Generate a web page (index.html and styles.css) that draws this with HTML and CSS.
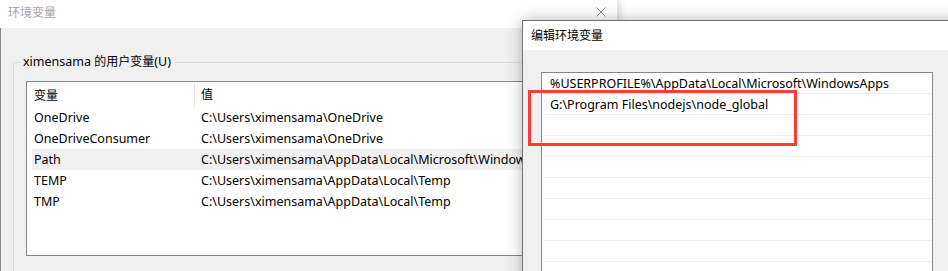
FILE: index.html
```html
<!DOCTYPE html>
<html lang="zh-CN">
<head>
<meta charset="utf-8">
<link rel="stylesheet" href="styles.css">
</head>
<body>
<div class="desktop">
  <div class="win win-env">
    <div class="titlebar">
      <span class="title inactive">环境变量</span>
      <svg class="close" width="10" height="10" viewBox="0 0 10 10"><path d="M0.5 0.5L9.5 9.5M9.5 0.5L0.5 9.5" stroke="#8a8a8a" stroke-width="1"/></svg>
    </div>
    <div class="body">
      <div class="group">
        <div class="legend">ximensama <span class="cjk">的用户变量</span>(U)</div>
        <div class="listview">
          <div class="lv-head">
            <div class="col c1 cjk">变量</div>
            <div class="col c2 cjk">值</div>
          </div>
          <div class="lv-row"><div class="col c1">OneDrive</div><div class="col c2">C:\Users\ximensama\OneDrive</div></div>
          <div class="lv-row"><div class="col c1">OneDriveConsumer</div><div class="col c2">C:\Users\ximensama\OneDrive</div></div>
          <div class="lv-row hl"><div class="col c1">Path</div><div class="col c2">C:\Users\ximensama\AppData\Local\Microsoft\WindowsApps;</div></div>
          <div class="lv-row"><div class="col c1">TEMP</div><div class="col c2">C:\Users\ximensama\AppData\Local\Temp</div></div>
          <div class="lv-row"><div class="col c1">TMP</div><div class="col c2">C:\Users\ximensama\AppData\Local\Temp</div></div>
        </div>
      </div>
    </div>
  </div>

  <div class="win win-edit">
    <div class="titlebar2">
      <span class="title">编辑环境变量</span>
    </div>
    <div class="body2">
      <div class="pathlist">
        <div class="p-row">%USERPROFILE%\AppData\Local\Microsoft\WindowsApps</div>
        <div class="p-row">G:\Program Files\nodejs\node_global</div>
        <div class="p-row"></div>
        <div class="p-row"></div>
        <div class="p-row"></div>
        <div class="p-row"></div>
        <div class="p-row"></div>
        <div class="p-row"></div>
        <div class="p-row"></div>
        <div class="p-row"></div>
      </div>
    </div>
  </div>

  <div class="mark"></div>
</div>
</body>
</html>
```

FILE: styles.css
```css
html, body {
  margin: 0;
  padding: 0;
  width: 948px;
  height: 271px;
  overflow: hidden;
  background: #ffffff;
}
.desktop {
  position: relative;
  width: 948px;
  height: 271px;
  overflow: hidden;
  font-family: "Noto Sans", "Noto Sans CJK SC", sans-serif;
  font-size: 12.5px;
  color: #000;
}
.cjk {
  font-size: 12px;
}
.win {
  position: absolute;
  display: flex;
  flex-direction: column;
}
.win-env {
  left: 0;
  top: 0;
  width: 617px;
  height: 300px;
  box-shadow: 2px 0 8px rgba(0,0,0,0.18);
}
.titlebar {
  height: 28px;
  flex: none;
  background: #fff;
  display: flex;
  align-items: center;
  padding-left: 8px;
  padding-right: 11px;
  box-sizing: border-box;
}
.title {
  flex: 1;
  font-size: 12px;
  line-height: 16px;
  padding-bottom: 2px;
}
.title.inactive {
  color: #a6a6a6;
}
.close {
  flex: none;
  margin-bottom: 4px;
}
.body {
  flex: 1;
  background: #f0f0f0;
  border-left: 1px solid #8c8c8c;
  padding: 34px 0 0 12px;
}
.group {
  position: relative;
  border-left: 1px solid #dcdcdc;
  border-top: 1px solid #dcdcdc;
  padding: 18px 0 0 12px;
  height: 260px;
}
.legend {
  position: absolute;
  left: 6px;
  top: -9px;
  padding: 0 3px;
  background: #f0f0f0;
  line-height: 16px;
}
.listview {
  background: #fff;
  border: 1px solid #828790;
  border-right: none;
  height: 173px;
  padding-left: 5px;
}
.lv-head {
  display: flex;
  height: 25px;
  align-items: center;
}
.lv-head .c1 {
  border-right: 1px solid #e5e5e5;
  height: 24px;
  display: flex;
  align-items: center;
  margin-top: 1px;
}
.lv-row {
  display: flex;
  height: 21px;
  align-items: center;
}
.lv-row.hl {
  background: #f0f0f0;
}
.col {
  white-space: nowrap;
  overflow: hidden;
  padding-bottom: 1px;
}
.c1 {
  width: 161px;
  padding-left: 2px;
  flex: none;
}
.lv-head .c1 {
  width: 160px;
}
.c2 {
  padding-left: 6px;
}
.win-edit {
  left: 522px;
  top: 20px;
  width: 480px;
  height: 300px;
  border: 1px solid #707070;
  background: #f0f0f0;
  box-shadow: 0 0 14px rgba(0,0,0,0.28);
}
.titlebar2 {
  height: 29px;
  flex: none;
  background: #fff;
  display: flex;
  align-items: center;
  padding-left: 8px;
  padding-top: 2px;
  box-sizing: border-box;
}
.body2 {
  flex: 1;
  background: #f0f0f0;
  padding: 22px 0 0 18px;
}
.pathlist {
  width: 389px;
  height: 260px;
  background: #fff;
  border: 1px solid #828790;
  padding-left: 1px;
}
.p-row {
  border-bottom: 1px solid #eeeeee;
  display: flex;
  align-items: center;
  padding-left: 7px;
  padding-top: 1px;
  height: 19px;
  line-height: 16px;
  white-space: nowrap;
}
.mark {
  position: absolute;
  left: 528px;
  top: 90px;
  width: 263px;
  height: 50px;
  border: 3px solid #ff3b3b;
}
```
